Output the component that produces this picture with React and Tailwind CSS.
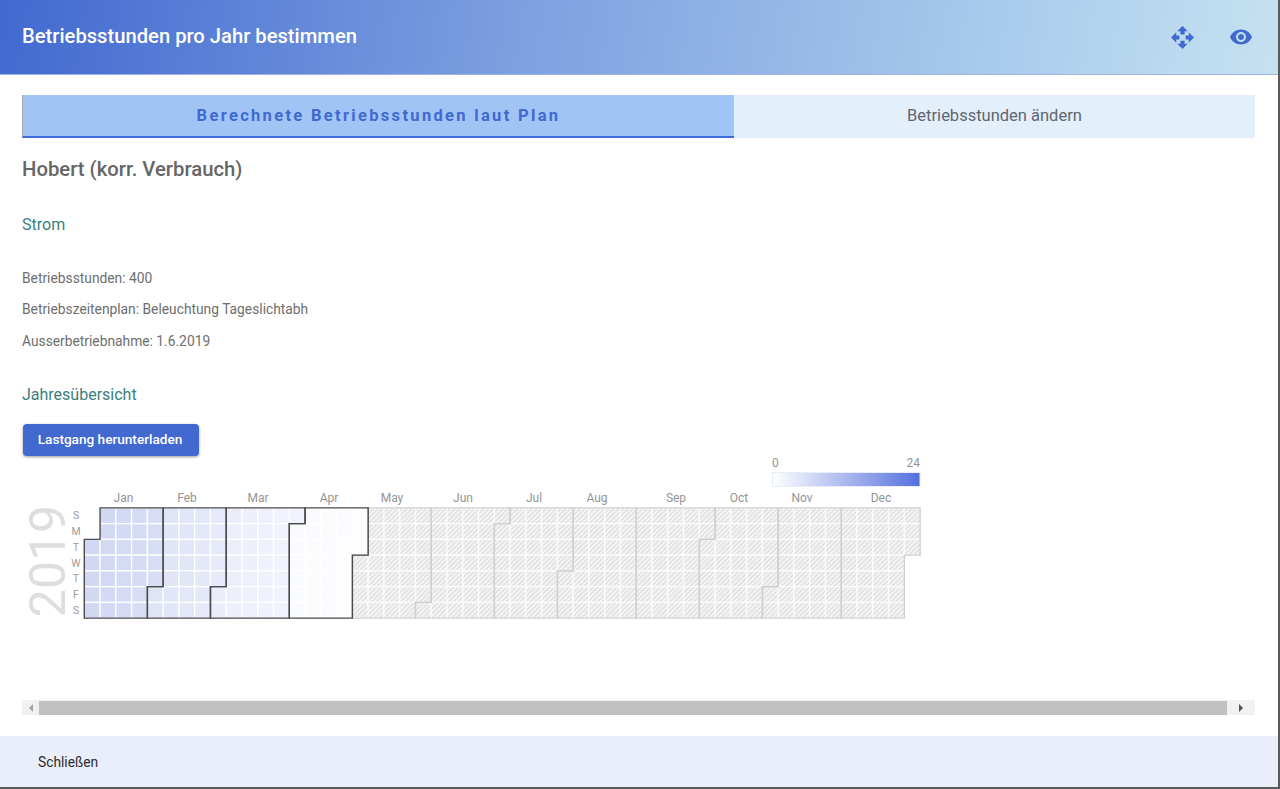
import { MdOpenWith, MdVisibility } from "react-icons/md";

const CELL_W = 15.77;
const CELL_H = 15.75;
const LEFT = 84.3;
const TOP = 506.9;

const monthNames = ["Jan", "Feb", "Mar", "Apr", "May", "Jun", "Jul", "Aug", "Sep", "Oct", "Nov", "Dec"];
const dayNames = ["S", "M", "T", "W", "T", "F", "S"];
const monthLabelX = [123.5, 187, 258, 329, 392, 463, 534, 597, 676, 739, 802, 881];

// start and end shade of the months that have data
const shades = [
  [[209, 215, 244], [217, 222, 246]],
  [[223, 228, 247], [230, 234, 249]],
  [[235, 238, 250], [241, 243, 252]],
  [[250, 251, 254], [252, 253, 255]],
];

const yearOffset = 2; // 1 Jan 2019 is a Tuesday
const daysInMonth = [31, 28, 31, 30, 31, 30, 31, 31, 30, 31, 30, 31];

function buildDays() {
  const days = [];
  let n = yearOffset;
  daysInMonth.forEach((count, month) => {
    for (let d = 0; d < count; d++) {
      days.push({ month, t: d / (count - 1), col: Math.floor(n / 7), row: n % 7 });
      n++;
    }
  });
  return days;
}

function monthPath(month) {
  const before = daysInMonth.slice(0, month).reduce((a, b) => a + b, 0);
  const first = before + yearOffset;
  const last = first + daysInMonth[month] - 1;
  const x = (c) => LEFT + c * CELL_W;
  const y = (r) => TOP + r * CELL_H;
  const c0 = Math.floor(first / 7);
  const r0 = first % 7;
  const c1 = Math.floor(last / 7);
  const r1 = last % 7;
  return `M${x(c0 + 1)} ${y(r0)}H${x(c0)}V${y(7)}H${x(c1)}V${y(r1 + 1)}H${x(c1 + 1)}V${y(0)}H${x(c0 + 1)}Z`;
}

function cellFill(day) {
  if (day.month > 3) return "url(#hatch)";
  const [a, b] = shades[day.month];
  const c = a.map((v, i) => Math.round(v + (b[i] - v) * day.t));
  return `rgb(${c[0]},${c[1]},${c[2]})`;
}

function Heatmap() {
  const days = buildDays();
  return (
    <svg width="942" height="170" viewBox="0 455 942 170" className="block -ml-[22px]" style={{ fontFamily: "Roboto, sans-serif" }}>
      <defs>
        <pattern id="hatch" width="3.4" height="3.4" patternUnits="userSpaceOnUse" patternTransform="rotate(45)">
          <rect width="3.4" height="3.4" fill="#f5f5f5" />
          <rect width="1.5" height="3.4" fill="#e0e0e0" />
        </pattern>
        <linearGradient id="legend">
          <stop offset="0" stopColor="#ffffff" />
          <stop offset="1" stopColor="#5470de" />
        </linearGradient>
      </defs>

      {/* Legend */}
      <text x="772" y="466" fontSize="12" fill="#949494">0</text>
      <text x="920" y="466" fontSize="12" fill="#949494" textAnchor="end">24</text>
      <rect x="772.5" y="471.5" width="147.5" height="14" fill="url(#legend)" stroke="#e8ebf8" />

      {/* Year and day labels */}
      <text transform="translate(65 560) rotate(-90)" fontSize="50" fill="#dedede" textAnchor="middle">2019</text>
      {dayNames.map((d, i) => (
        <text key={i} x="76" y={TOP + i * CELL_H + 11.4} fontSize="10.5" fill="#9c9c9c" textAnchor="middle">{d}</text>
      ))}
      {monthNames.map((m, i) => (
        <text key={m} x={monthLabelX[i]} y="501" fontSize="12" fill="#949494" textAnchor="middle">{m}</text>
      ))}

      {/* Days */}
      {days.map((day, i) => (
        <rect key={i} x={LEFT + day.col * CELL_W} y={TOP + day.row * CELL_H} width={CELL_W} height={CELL_H}
          fill={cellFill(day)} stroke="#ffffff" strokeOpacity={day.month > 3 ? 0.7 : 0.9} strokeWidth="1.4" />
      ))}

      {/* Month outlines, the months with data on top */}
      {monthNames.map((m, i) => i > 3 && (
        <path key={m} d={monthPath(i)} fill="none" stroke="#cfcfcf" strokeWidth="1.4" />
      ))}
      {monthNames.map((m, i) => i <= 3 && (
        <path key={m} d={monthPath(i)} fill="none" stroke="#4a4a4a" strokeWidth="1.4" />
      ))}
    </svg>
  );
}

export default function App() {
  return (
    <div className="h-[789px] w-[1280px] bg-[#5a5a5a] overflow-hidden text-[#6e6e6e] font-['Roboto',sans-serif]">
      <div className="h-[787px] w-[1278px] bg-white flex flex-col">
        {/* Header */}
        <header className="h-[75px] shrink-0 flex items-center border-b border-[#9fb3e3] bg-[linear-gradient(100deg,#4169d0_0%,#7c9fe0_40%,#a9cbec_78%,#c6e2f1_100%)]">
          <h1 className="ml-[22px] text-[20.2px] leading-none font-medium text-white flex-1 -mt-[2px]">Betriebsstunden pro Jahr bestimmen</h1>
          <MdOpenWith size={25} className="text-[#4169d0] mr-[34px]" />
          <MdVisibility size={24} className="text-[#4169d0] mr-[25px]" />
        </header>

        <main className="flex-1 px-[22px] pt-[20px] pr-[23px] flex flex-col">
          {/* Tabs */}
          <div className="flex h-[43px] shrink-0">
            <div className="w-[712px] pt-px bg-[#a0c5f5] border-b-2 border-[#3f6cdc] border-l border-l-[#a8a8a8] flex items-center justify-center text-[16.5px] font-bold tracking-[2.32px] text-[#4169d0]">
              Berechnete Betriebsstunden laut Plan
            </div>
            <div className="flex-1 bg-[#e4effc] flex items-center justify-center text-[16.5px] text-[#5f6670]">
              Betriebsstunden ändern
            </div>
          </div>

          <h2 className="mt-[19px] text-[20.3px] leading-[24px] font-medium text-[#666666]">Hobert (korr. Verbrauch)</h2>
          <h3 className="mt-[34px] text-[16px] leading-[20px] text-[#3a807c]">Strom</h3>
          <p className="mt-[32.5px] text-[13.8px] leading-[20px]">Betriebsstunden: 400</p>
          <p className="mt-[11.5px] text-[13.8px] leading-[20px]">Betriebszeitenplan: Beleuchtung Tageslichtabh</p>
          <p className="mt-[11.5px] text-[13.8px] leading-[20px]">Ausserbetriebnahme: 1.6.2019</p>
          <h3 className="mt-[34.5px] text-[16px] leading-[20px] text-[#3a807c]">Jahresübersicht</h3>

          <button className="mt-[19px] ml-px pr-[2px] pb-px w-[176px] h-[32px] rounded bg-[#4169d0] text-white text-[13.6px] font-medium shadow-[0_1px_3px_rgba(0,0,0,0.4)]">
            Lastgang herunterladen
          </button>

          <Heatmap />

          {/* Scrollbar */}
          <div className="mt-[74px] h-[15px] bg-[#f1f1f1] flex items-center">
            <div className="w-[17px] flex justify-center">
              <div className="w-0 h-0 border-y-[4px] border-y-transparent border-r-[4px] border-r-[#a3a3a3]" />
            </div>
            <div className="flex-1 h-[14px] bg-[#c1c1c1]" />
            <div className="w-[28px] flex justify-center">
              <div className="w-0 h-0 border-y-[4px] border-y-transparent border-l-[4px] border-l-[#505050]" />
            </div>
          </div>
        </main>

        {/* Footer */}
        <footer className="h-[51px] shrink-0 bg-[#eaeefa] flex items-center pl-[38px] pt-px text-[13.8px] text-[#2b2b2b]">
          Schließen
        </footer>
      </div>
    </div>
  );
}
